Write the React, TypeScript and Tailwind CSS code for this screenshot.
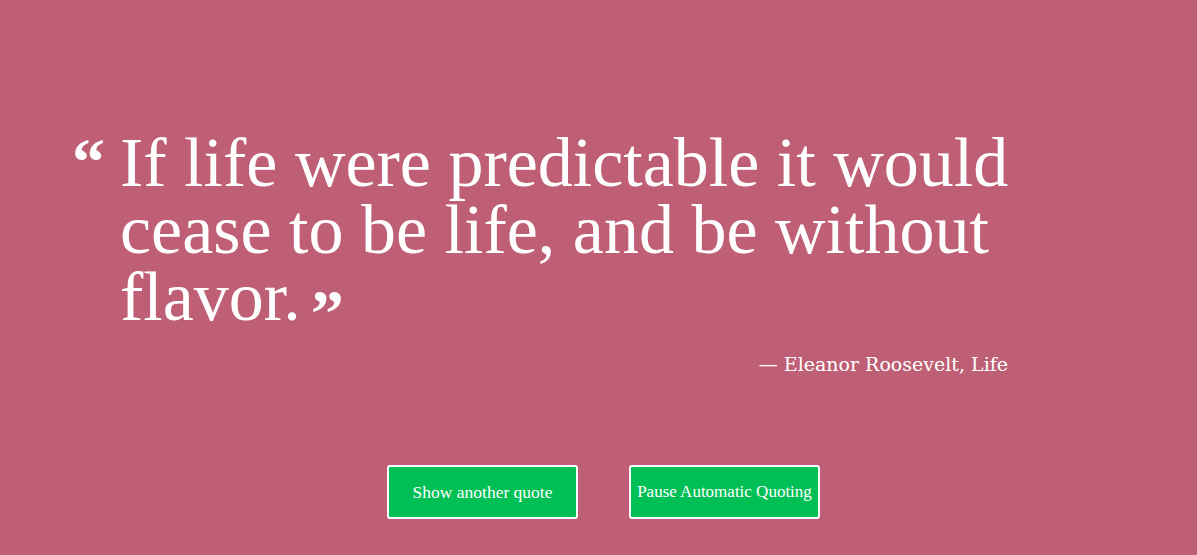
export default function App() {
  return (
    <div
      className="h-[555px] w-full overflow-hidden bg-[#bf5f75] text-white"
      style={{ fontFamily: '"Liberation Serif", "DejaVu Serif", serif' }}
    >
      <div className="ml-[75px] w-[933px] pt-[129px]">
        <div className="flex">
          <span className="-ml-[3px] w-[48px] shrink-0 text-[66px] font-bold leading-[66px]">
            &ldquo;
          </span>
          <p className="whitespace-nowrap text-[70px] leading-[67px]">
            If life were predictable it would
            <br />
            cease to be life, and be without
            <br />
            flavor.
            <span className="relative top-[15px] ml-[10px] text-[66px] font-bold leading-[0]">
              &rdquo;
            </span>
          </p>
        </div>
        <p className="mt-[22px] text-right font-['DejaVu_Serif'] text-[19px] leading-[24px]">
          &mdash; Eleanor Roosevelt, Life
        </p>
      </div>
      <div className="mt-[89px] flex justify-center gap-[51px] pl-[10px]">
        <button className="h-[54px] w-[191px] rounded-[3px] border-2 border-white bg-[#00bf55] text-[17.5px] text-white">
          Show another quote
        </button>
        <button className="h-[54px] w-[191px] rounded-[3px] border-2 border-white bg-[#00bf55] px-0 text-[17px] text-white">
          Pause Automatic Quoting
        </button>
      </div>
    </div>
  );
}
